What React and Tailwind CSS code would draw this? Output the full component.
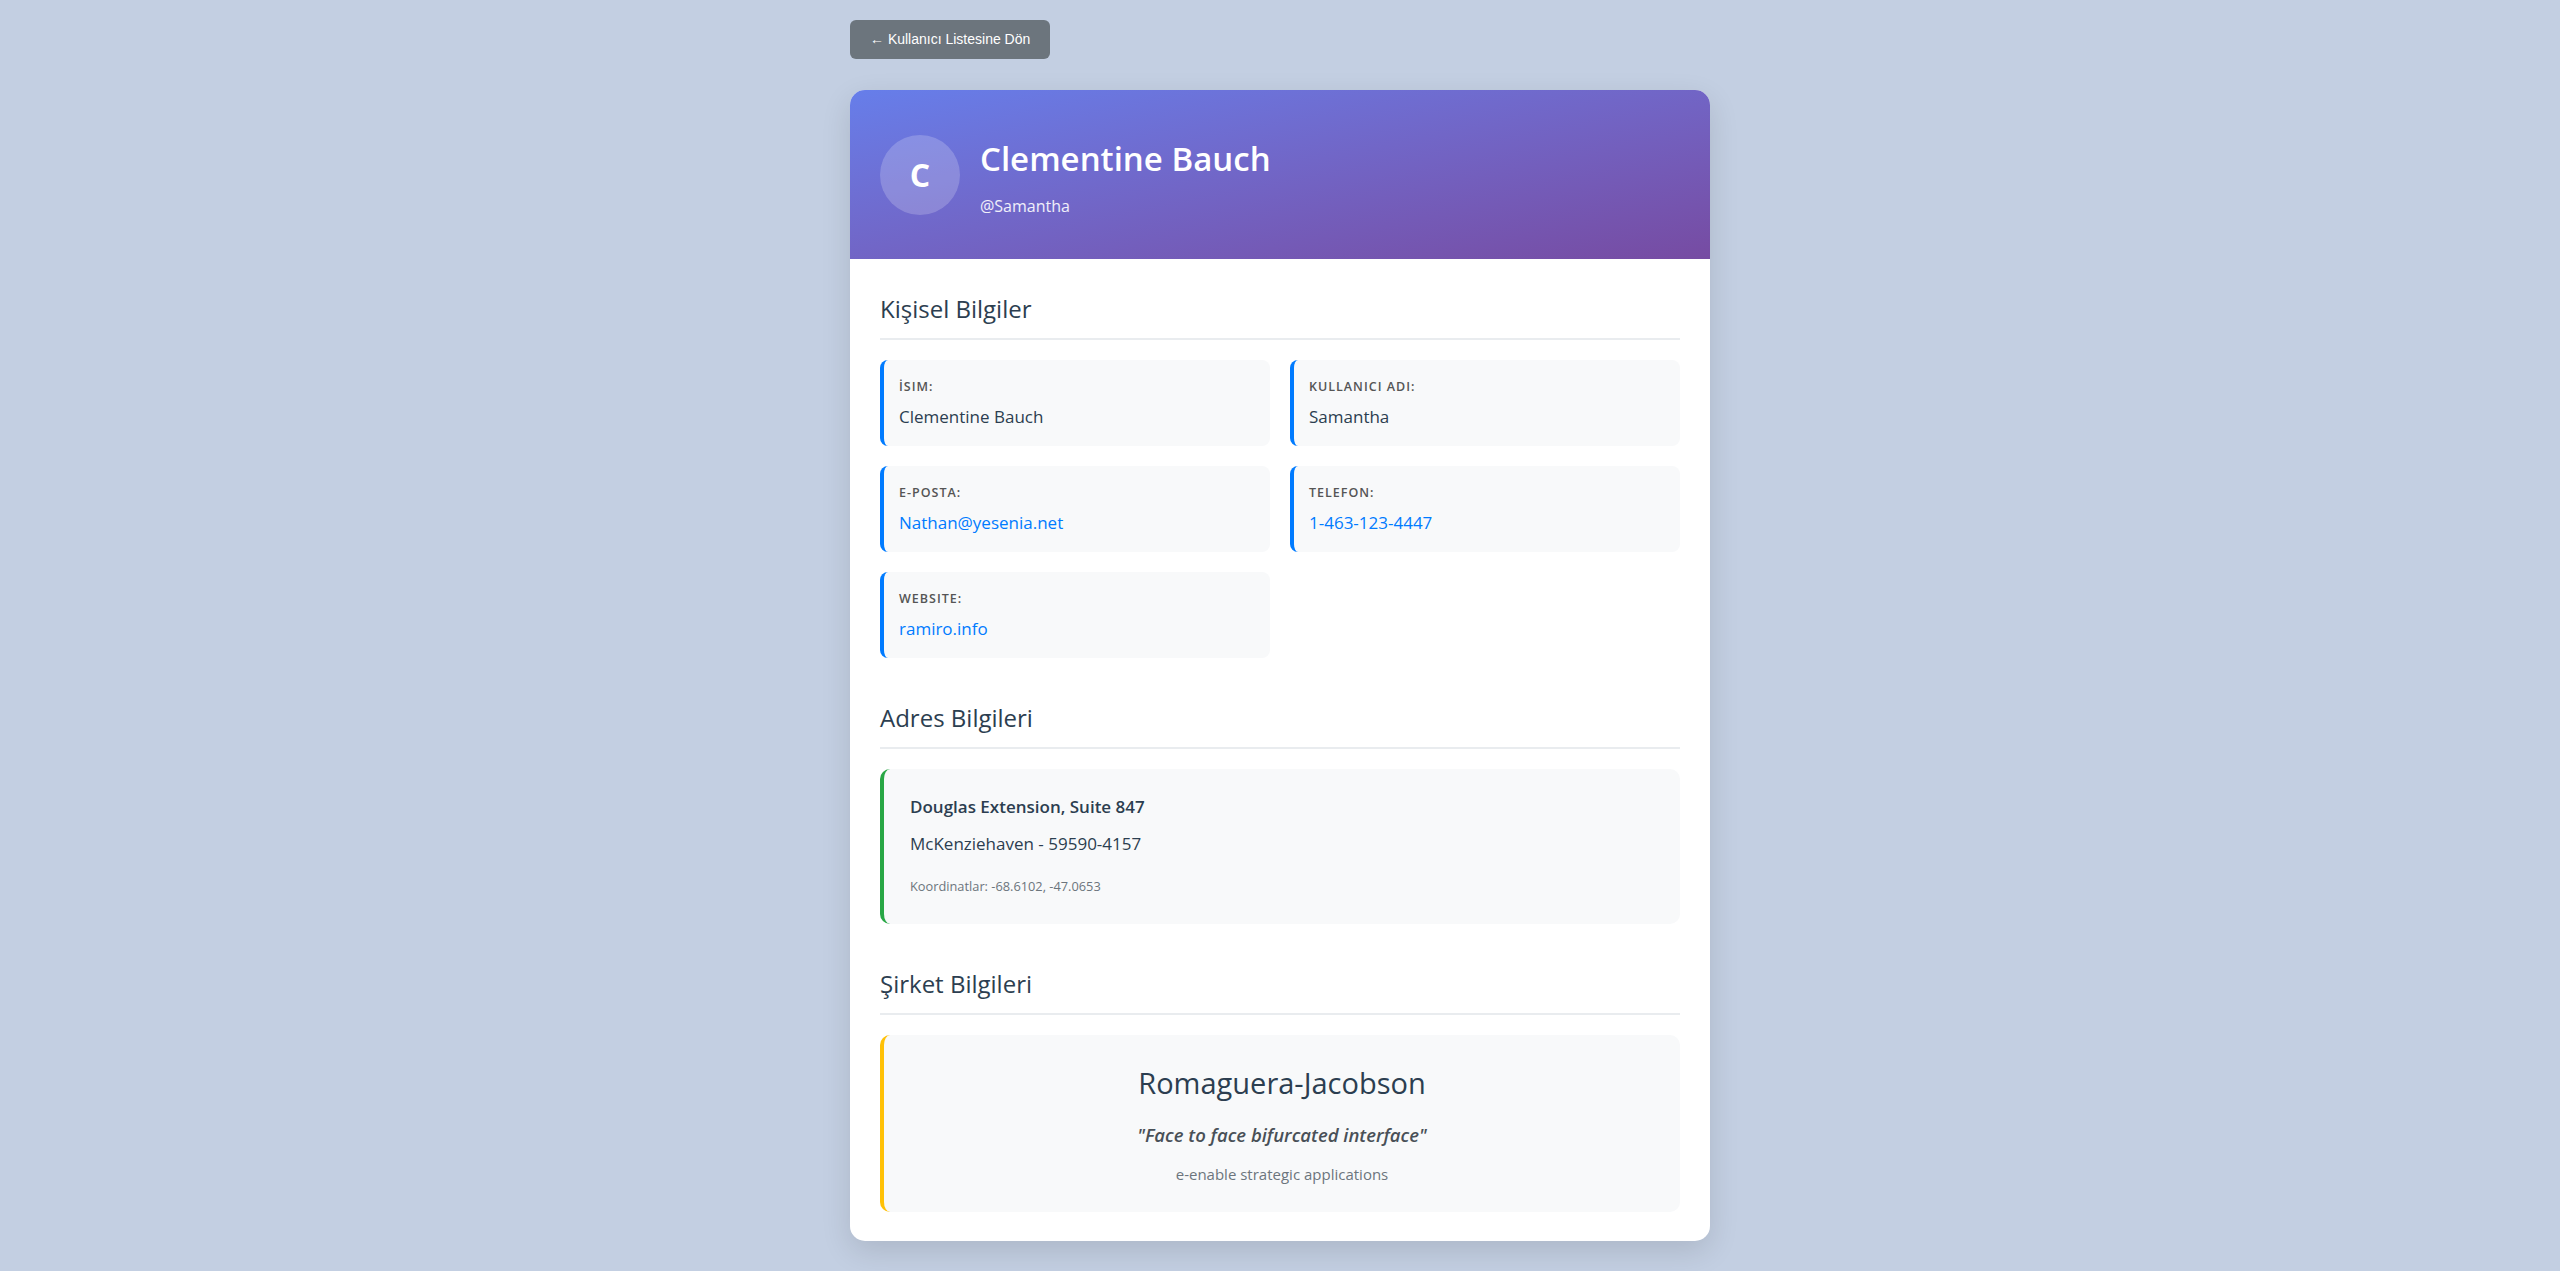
import React from "react";

function InfoItem({ label, value, link }) {
  return (
    <div className="rounded-[8px] border-l-4 border-[#007bff] bg-[#f8f9fa] pl-[15px] pr-[15px] pt-[17px] pb-[16px]">
      <div className="mb-[7px] text-[12.5px] leading-[20px] font-semibold uppercase tracking-[1px] text-[#555]">
        {label}
      </div>
      <div
        className={
          "text-[17px] leading-[26px] font-medium " +
          (link ? "text-[#007bff]" : "text-[#2c3e50]")
        }
      >
        {value}
      </div>
    </div>
  );
}

function SectionTitle({ children }) {
  return (
    <h2 className="mb-5 border-b-2 border-[#e9ecef] pb-[13px] text-[24px] leading-[32px] font-medium text-[#2c3e50]">
      {children}
    </h2>
  );
}

export default function App() {
  return (
    <div
      className="min-h-screen bg-[#c3cfe2] pb-[31px] pt-5"
      style={{ fontFamily: "'Open Sans', 'Noto Sans', sans-serif" }}
    >
      <div className="mx-auto w-[860px]">
        <button
          className="mb-[31px] flex h-[39px] items-center rounded-[6px] bg-[#6c757d] px-5 text-[14px] text-white"
          style={{ fontFamily: "'Liberation Sans', Arial, sans-serif" }}
        >
          ← Kullanıcı Listesine Dön
        </button>

        <div className="overflow-hidden rounded-[15px] bg-white shadow-[0_10px_30px_rgba(0,0,0,0.12)]">
          <div className="flex h-[169px] items-center gap-5 bg-gradient-to-br from-[#667eea] to-[#764ba2] px-[30px]">
            <div className="flex h-20 w-20 items-center justify-center rounded-full bg-white/20 text-[32px] font-bold text-white">
              C
            </div>
            <div className="flex flex-col pt-[5px]">
              <h1 className="mb-[13px] text-[33px] leading-[44px] font-semibold text-white">
                Clementine Bauch
              </h1>
              <div className="text-[16px] leading-[24px] text-white/90">@Samantha</div>
            </div>
          </div>

          <div className="flex flex-col gap-[44px] px-[30px] pt-[34px] pb-[29px]">
            <section>
              <SectionTitle>Kişisel Bilgiler</SectionTitle>
              <div className="grid grid-cols-2 gap-5">
                <InfoItem label="İsim:" value="Clementine Bauch" />
                <InfoItem label="Kullanıcı Adı:" value="Samantha" />
                <InfoItem label="E-posta:" value="Nathan@yesenia.net" link />
                <InfoItem label="Telefon:" value="1-463-123-4447" link />
                <InfoItem label="Website:" value="ramiro.info" link />
              </div>
            </section>

            <section>
              <SectionTitle>Adres Bilgileri</SectionTitle>
              <div className="rounded-[10px] border-l-4 border-[#28a745] bg-[#f8f9fa] px-[26px] pt-[25px] pb-[29px]">
                <p className="mb-[12px] text-[17px] leading-[25px] font-semibold text-[#2c3e50]">
                  Douglas Extension, Suite 847
                </p>
                <p className="mb-[21px] text-[17px] leading-[25px] text-[#2c3e50]">
                  McKenziehaven - 59590-4157
                </p>
                <p className="text-[12.8px] leading-[18px] text-[#6c757d]">
                  Koordinatlar: -68.6102, -47.0653
                </p>
              </div>
            </section>

            <section>
              <SectionTitle>Şirket Bilgileri</SectionTitle>
              <div className="rounded-[10px] border-l-4 border-[#ffc107] bg-[#f8f9fa] px-[26px] pt-[30px] pb-[28px] text-center">
                <h3 className="mb-[21px] text-[29px] leading-[36px] text-[#2c3e50]">
                  Romaguera-Jacobson
                </h3>
                <p className="mb-[16px] text-[18.5px] leading-[26px] font-semibold italic text-[#495057]">
                  "Face to face bifurcated interface"
                </p>
                <p className="text-[15px] leading-[20px] text-[#6c757d]">
                  e-enable strategic applications
                </p>
              </div>
            </section>
          </div>
        </div>
      </div>
    </div>
  );
}
